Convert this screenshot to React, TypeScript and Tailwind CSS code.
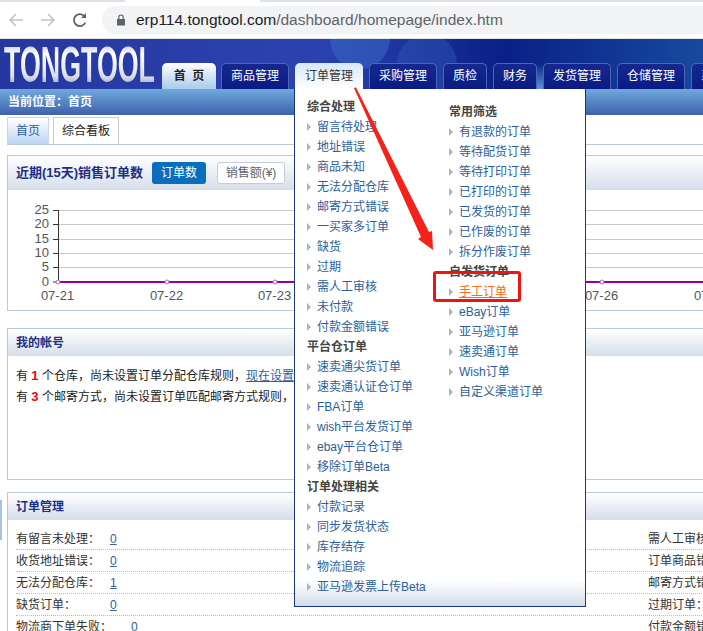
import React from "react";

const TABS: [string, number][] = [["采购管理", 68], ["质检", 44], ["财务", 44], ["发货管理", 68], ["仓储管理", 68], ["系统管理", 68]];

function Tab({ label, w }: { label: string; w: number }) {
  return (
    <div
      className="h-[26px] shrink-0 rounded-t-[5px] border border-b-0 border-[#4a66b4] bg-gradient-to-b from-[#14298f] to-[#0a1b84] text-center text-[12px] leading-[24px] text-white"
      style={{ width: w }}
    >
      {label}
    </div>
  );
}

function Item({ label, active }: { label: string; active?: boolean }) {
  return (
    <div className="flex h-5 items-center">
      <svg width="4" height="8" viewBox="0 0 4 8" className="mr-[6px] shrink-0">
        <path d="M0 0 L4 4 L0 8 Z" fill="#a9b6bf" />
      </svg>
      <span className={active ? "text-[#ff6a13] underline" : "text-[#2d6099]"}>{label}</span>
    </div>
  );
}

function Head({ label }: { label: string }) {
  return <div className="h-5 font-bold leading-5 text-[#444]">{label}</div>;
}

function PanelHead({ children }: { children: React.ReactNode }) {
  return (
    <div className="flex h-[27px] items-center bg-gradient-to-b from-white to-[#d6deea] pl-2 text-[12px] font-bold text-[#1c2f86]">
      {children}
    </div>
  );
}

function Row({ label, value, right, wide }: { label: string; value: string; right: string; wide?: boolean }) {
  return (
    <div className="grid h-[22px] grid-cols-[94px_538px_120px] items-center border-b border-dotted border-[#bbb] text-[12px] text-[#333]">
      <span className="whitespace-nowrap">{label}</span>
      <span className={wide ? "pl-[21px] text-[#2d6099]" : "text-[#2d6099]"}>
        <span className="underline">{value}</span>
      </span>
      <span className="whitespace-nowrap">{right}</span>
    </div>
  );
}

function Chart() {
  const ys = [210.5, 224.5, 239.5, 253.5, 267.5];
  const labels = ["25", "20", "15", "10", "5"];
  const xs = [58, 167, 275, 384, 493, 602, 711];
  const dates = ["07-21", "07-22", "07-23", "07-24", "07-25", "07-26", "07-27"];
  return (
    <svg width="696" height="120" viewBox="8 190 696 120" className="block">
      {ys.map((y, i) => (
        <g key={y}>
          <line x1="58" x2="704" y1={y} y2={y} stroke="#c8c8c8" />
          <line x1="53" x2="58" y1={y} y2={y} stroke="#333" />
          <text x="49" y={y + 3.5} textAnchor="end" fontSize="13" fill="#555" fontFamily="Liberation Sans">{labels[i]}</text>
        </g>
      ))}
      <line x1="58.5" x2="58.5" y1="210" y2="282" stroke="#333" />
      <text x="49" y="285.5" textAnchor="end" fontSize="13" fill="#555" fontFamily="Liberation Sans">0</text>
      <line x1="53" x2="58" y1="282" y2="282" stroke="#333" />
      <line x1="58" x2="704" y1="282" y2="282" stroke="#990099" strokeWidth="2" />
      {xs.map((x, i) => (
        <g key={x}>
          <circle cx={x} cy="282" r="2" fill="#fff" stroke="#c060c0" strokeWidth="1" />
          <text x={x - 0.5} y="300" textAnchor="middle" fontSize="13" fill="#555" fontFamily="Liberation Sans">{dates[i]}</text>
        </g>
      ))}
    </svg>
  );
}

export default function App() {
  return (
    <div
      className="relative h-[631px] w-[703px] overflow-hidden bg-white text-[12px]"
      style={{ fontFamily: '"Liberation Sans", "Noto Sans CJK SC", sans-serif' }}
    >
      {/* browser bar */}
      <div className="h-[39px] border-b border-[#dfe1e5] bg-white">
        <div className="flex h-[2px]">
          <div className="h-[2px] w-[125px] bg-[#dee1e6]" />
          <div className="h-[2px] w-[135px] bg-white" />
          <div className="h-[2px] flex-1 bg-[#dee1e6]" />
        </div>
        <div className="flex h-[36px] items-center">
          <svg width="16" height="16" viewBox="0 0 16 16" className="ml-[8px]" fill="none" stroke="#c0c2c5" strokeWidth="1.6">
            <path d="M15 8 H2 M8 2 L2 8 L8 14" />
          </svg>
          <svg width="16" height="16" viewBox="0 0 16 16" className="ml-[16px]" fill="none" stroke="#c0c2c5" strokeWidth="1.6">
            <path d="M1 8 H14 M8 2 L14 8 L8 14" />
          </svg>
          <svg width="16" height="16" viewBox="0 0 16 16" className="ml-[16px]" fill="none" stroke="#5f6368" strokeWidth="1.8">
            <path d="M13.4 10.5 A6 6 0 1 1 12.5 4.2" />
            <path d="M14 1 V6 H9 Z" fill="#5f6368" stroke="none" />
          </svg>
          <div className="ml-[14px] flex h-[28px] flex-1 items-center rounded-l-[14px] bg-[#f1f3f4] pl-[14px] text-[15.5px]">
            <svg width="10" height="12" viewBox="0 0 10 12" className="mr-[10px]">
              <path d="M1 5 H9 V11.5 H1 Z" fill="#5f6368" />
              <path d="M2.8 5 V3.2 A2.2 2.2 0 0 1 7.2 3.2 V5" fill="none" stroke="#5f6368" strokeWidth="1.2" />
            </svg>
            <span className="text-[#202124]">erp114.tongtool.com</span>
            <span className="text-[#5f6368]">/dashboard/homepage/index.htm</span>
          </div>
        </div>
      </div>

      {/* header */}
      <div className="relative flex h-[50px] items-end overflow-hidden bg-[linear-gradient(90deg,#24389f_0%,#2c42ae_45%,#0a2088_72%,#164a9e_100%)]">
        <div className="absolute left-[330px] top-[-30px] h-[60px] w-[60px] rounded-full bg-[#3a6cc8] opacity-50" />
        <div className="absolute left-[397px] top-[-5px] h-[60px] w-[60px] rounded-full bg-[#3a6cc8] opacity-30" />
        <div className="absolute left-[500px] top-[25px] h-[50px] w-[80px] rounded-full bg-[radial-gradient(closest-side,#5f93d8,transparent)]" />
        <svg width="160" height="50" className="absolute left-0 top-0 blur-[0.5px]">
          <defs>
            <linearGradient id="lg" x1="0" y1="0" x2="0" y2="1">
              <stop offset="0" stopColor="#9aa1bf" />
              <stop offset="0.3" stopColor="#ffffff" />
              <stop offset="0.7" stopColor="#dcdee6" />
              <stop offset="1" stopColor="#737ba6" />
            </linearGradient>
          </defs>
          <text x="4" y="43" fontSize="50" fontWeight="bold" fontFamily="Liberation Sans" textLength="151" lengthAdjust="spacingAndGlyphs" fill="url(#lg)">TONGTOOL</text>
        </svg>
        <div className="relative ml-[162px] flex gap-[5px]">
          <div className="h-[26px] w-[54px] rounded-t-[5px] bg-gradient-to-b from-white to-[#a9cbe9] text-center text-[12px] font-bold leading-[26px] text-[#222]">
            首&nbsp;&nbsp;页
          </div>
          <Tab label="商品管理" w={68} />
          <div className="ml-[1px] h-[26px] w-[68px] rounded-t-[5px] bg-gradient-to-b from-[#d8e8f6] to-white text-center leading-[26px] text-[#333]">订单管理</div>
          <div className="ml-[1px] flex gap-[6px]">
            {TABS.map(([l, w]) => (
              <Tab key={l} label={l} w={w} />
            ))}
          </div>
        </div>
      </div>

      {/* breadcrumb */}
      <div className="flex h-[26px] items-center bg-gradient-to-b from-[#70a9dc] to-[#3e61ac] pl-2 font-bold text-white">当前位置：首页</div>

      {/* sub tabs */}
      <div className="mt-[2px] ml-[7px] flex h-[28px] gap-1 border-b border-[#b9cade]">
        <div className="w-[42px] border border-b-0 border-[#ccd6e4] bg-gradient-to-b from-white to-[#bcd5f2] text-center leading-[26px] text-[#2a5c9e]">首页</div>
        <div className="w-[66px] border border-b-0 border-[#ccc] bg-white text-center leading-[26px] text-[#222]">综合看板</div>
      </div>

      {/* chart panel */}
      <div className="ml-[7px] mt-[10px] h-[156px] w-[720px] border border-[#b9cade]">
        <div className="flex h-[34px] items-center bg-gradient-to-b from-white to-[#d6deea] pl-2 font-bold text-[#1c2f86]">
          <span className="w-[136px] text-[13px]">近期(15天)销售订单数</span>
          <span className="h-[22px] w-[54px] rounded-[3px] bg-[#0a6ebd] text-center font-normal leading-[22px] text-white">订单数</span>
          <span className="ml-[11px] h-[22px] w-[68px] rounded-[3px] border border-[#c5ced8] bg-white text-center font-normal leading-[20px] text-[#666]">销售额(¥)</span>
        </div>
        <Chart />
      </div>

      {/* account panel */}
      <div className="ml-[7px] mt-[17px] h-[152px] w-[720px] border border-[#b9cade]">
        <PanelHead>我的帐号</PanelHead>
        <div className="pl-2 pt-[9px] text-[#222]">
          <div className="h-[21px] leading-[21px]">
            有 <b className="text-[#ff0000] text-[13px]">1</b> 个仓库，尚未设置订单分配仓库规则，<span className="text-[#2d6099] underline">现在设置</span>
          </div>
          <div className="h-[21px] leading-[21px]">
            有 <b className="text-[#ff0000] text-[13px]">3</b> 个邮寄方式，尚未设置订单匹配邮寄方式规则，
          </div>
        </div>
      </div>

      {/* orders panel */}
      <div className="ml-[7px] mt-[12px] w-[720px] border border-[#b9cade]">
        <PanelHead>订单管理</PanelHead>
        <div className="pl-2 pt-[8px]">
          <Row label="有留言未处理：" value="0" right="需人工审核订单：" />
          <Row label="收货地址错误：" value="0" right="订单商品错误：" />
          <Row label="无法分配仓库：" value="1" right="邮寄方式错误：" />
          <Row label="缺货订单：" value="0" right="过期订单：" />
          <Row label="物流商下单失败：" value="0" right="付款金额错误：" wide />
        </div>
      </div>

      <div className="absolute left-0 top-[500px] h-[40px] w-[2px] bg-[#a9c0e0]" />

      {/* dropdown menu */}
      <div className="absolute left-[294px] top-[89px] flex h-[518px] w-[292px] border border-t-0 border-[#173a7e] bg-gradient-to-b from-white from-[95%] to-[#d4dde9] pl-[12px] text-[12px]">
        <div className="w-[142px] pt-[8px]">
          <Head label="综合处理" />
          {["留言待处理", "地址错误", "商品未知", "无法分配仓库", "邮寄方式错误", "一买家多订单", "缺货", "过期", "需人工审核", "未付款", "付款金额错误"].map((l) => (
            <Item key={l} label={l} />
          ))}
          <Head label="平台仓订单" />
          {["速卖通尖货订单", "速卖通认证仓订单", "FBA订单", "wish平台发货订单", "ebay平台仓订单", "移除订单Beta"].map((l) => (
            <Item key={l} label={l} />
          ))}
          <Head label="订单处理相关" />
          {["付款记录", "同步发货状态", "库存结存", "物流追踪", "亚马逊发票上传Beta"].map((l) => (
            <Item key={l} label={l} />
          ))}
        </div>
        <div className="pt-[13px]">
          <Head label="常用筛选" />
          {["有退款的订单", "等待配货订单", "等待打印订单", "已打印的订单", "已发货的订单", "已作废的订单", "拆分作废订单"].map((l) => (
            <Item key={l} label={l} />
          ))}
          <Head label="自发货订单" />
          <Item label="手工订单" active />
          {["eBay订单", "亚马逊订单", "速卖通订单", "Wish订单", "自定义渠道订单"].map((l) => (
            <Item key={l} label={l} />
          ))}
        </div>
      </div>

      {/* annotations */}
      <div className="absolute left-[433px] top-[271px] h-[31px] w-[88px] rounded-[3px] border-[3px] border-[#f0140e]" />
      <svg width="120" height="190" viewBox="340 80 120 190" className="absolute left-[340px] top-[80px]">
        <path d="M354 88 L356 87.5 L429 232 L432 231 L433 250 L418 239 L421 237 Z" fill="#f5221b" />
      </svg>
    </div>
  );
}
